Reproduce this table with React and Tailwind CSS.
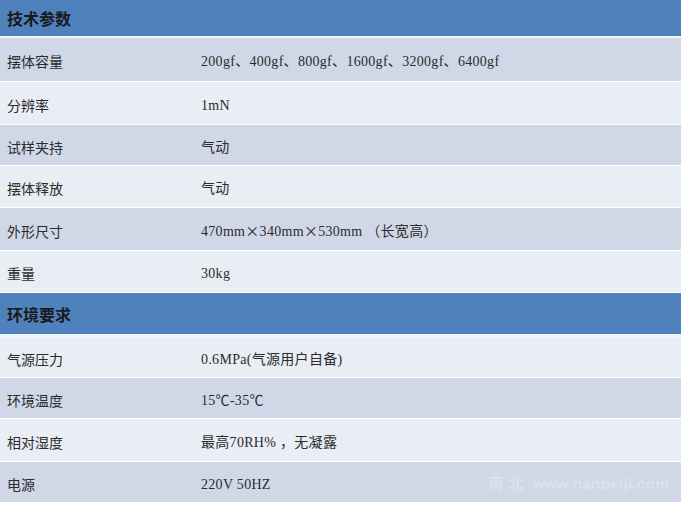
import React from "react";

const techRows = [
  { label: "摆体容量", value: "200gf、400gf、800gf、1600gf、3200gf、6400gf", h: "h-[44px]" },
  { label: "分辨率", value: "1mN", h: "h-[43px]" },
  { label: "试样夹持", value: "气动", h: "h-[41px]" },
  { label: "摆体释放", value: "气动", h: "h-[42px]" },
  {
    label: "外形尺寸",
    value: (
      <>
        470mm<span className="font-['Noto_Sans_CJK_SC',sans-serif]">×</span>340mm
        <span className="font-['Noto_Sans_CJK_SC',sans-serif]">×</span>530mm （长宽高）
      </>
    ),
    h: "h-[43px]",
  },
  { label: "重量", value: "30kg", h: "h-[42px]" },
];

const envRows = [
  { label: "气源压力", value: "0.6MPa(气源用户自备)", h: "h-[40px]" },
  { label: "环境温度", value: "15℃-35℃", h: "h-[41px]" },
  { label: "相对湿度", value: "最高70RH% ，无凝露", h: "h-[43px]" },
  { label: "电源", value: "220V 50HZ", h: "h-[41px]" },
];

function SectionHeader({ title, className }) {
  return (
    <div
      className={`flex items-center pl-[7px] bg-[#4f81bd] text-[16px] font-bold text-[#1a1a1a] font-['Noto_Sans_CJK_SC',sans-serif] ${className}`}
    >
      {title}
    </div>
  );
}

function Rows({ rows, startDark }) {
  return rows.map((row, i) => {
    const dark = startDark ? i % 2 === 0 : i % 2 === 1;
    return (
      <div
        key={row.label}
        className={`flex items-center border-b border-white text-[14px] text-[#2b2b2b] pt-[4px] ${row.h} ${
          dark ? "bg-[#d0d8e8]" : "bg-[#e9edf4]"
        }`}
      >
        <div className="w-[201px] pl-[7px] shrink-0 font-['Noto_Sans_CJK_SC',sans-serif]">
          {row.label}
        </div>
        <div className="tracking-[0.3px] font-['Liberation_Serif','Noto_Sans_CJK_SC',serif]">
          {row.value}
        </div>
      </div>
    );
  });
}

export default function App() {
  return (
    <div className="relative w-[681px] h-[505px] overflow-hidden bg-white">
      <SectionHeader title="技术参数" className="h-[38px] border-b-2 border-[#eef6fb]" />
      <Rows rows={techRows} startDark />
      <SectionHeader title="环境要求" className="h-[45px] border-b-4 border-[#eef6fb]" />
      <Rows rows={envRows} startDark={false} />

      {/* watermark */}
      <div className="absolute right-[12px] bottom-[10px] text-[15px] font-bold text-white/25 tracking-wide font-['Liberation_Sans','Noto_Sans_CJK_SC',sans-serif]">
        南 北&nbsp;&nbsp;www.nanbeiji.com
      </div>
    </div>
  );
}
